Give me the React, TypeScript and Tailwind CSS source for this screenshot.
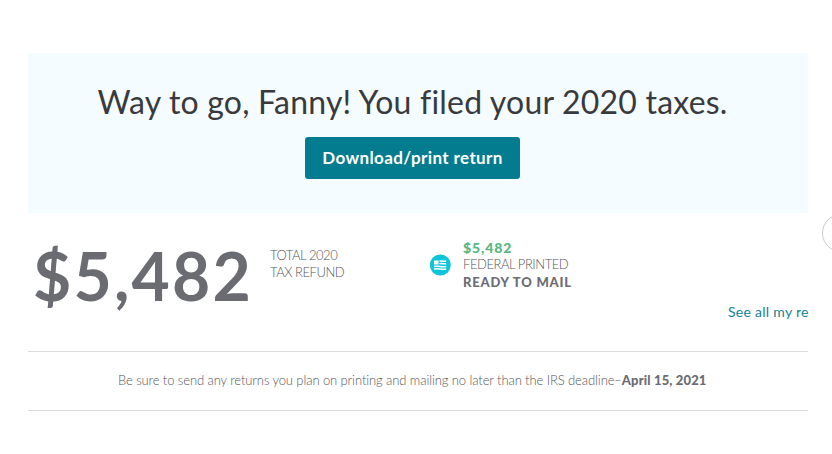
const refund = {
  amount: "$5,482",
  label: ["TOTAL 2020", "TAX REFUND"],
};

function MailIcon() {
  return (
    <svg width="22" height="22" viewBox="0 0 22 22" className="shrink-0">
      <circle cx="11.3" cy="11" r="10.5" fill="#0cc5da" />
      <path d="M5 6.5h4.5v4H5z" fill="#fff" />
      <path
        d="M10.5 7.3c2.2-.7 4.2.4 6.7-.2M10.5 9.8c2.2-.7 4.2.4 6.7-.1M5 12.6c4.2-1 7.4.8 12.2-.2M5 15.1c4.2-1 7.4.8 12.2-.2"
        stroke="#fff"
        strokeWidth="1.5"
        fill="none"
      />
    </svg>
  );
}

export default function App() {
  return (
    <div className="relative h-[454px] w-full overflow-hidden bg-white pt-[53px] pl-7 font-['Lato',sans-serif] text-[#6b6c72]">
      <main className="w-[780px]">
        {/* Banner */}
        <section className="flex h-40 flex-col items-center bg-[#f4fcff] pt-[29px]">
          <h1 className="mr-[11px] text-[32px] leading-10 tracking-[0.2px] whitespace-nowrap text-[#393a3d]">
            Way to go, Fanny! You filed your 2020 taxes.
          </h1>
          <button className="mt-[15px] mr-[11px] h-[41.5px] w-[215px] rounded-[3px] bg-[#037c8f] text-[17px] font-bold tracking-[0.38px] whitespace-nowrap text-white">
            Download/print return
          </button>
        </section>

        {/* Refund summary */}
        <section className="flex h-[138px]">
          <div className="w-[242px] pt-[23px] pl-[5px] text-[66px] leading-[80px] font-bold tracking-[2.2px]">
            {refund.amount}
          </div>
          <div className="w-[159px] pt-[34px] text-[13px] leading-[17px] font-light tracking-[-0.45px] text-[#55565c]">
            {refund.label.map((line) => (
              <p key={line}>{line}</p>
            ))}
          </div>
          <div className="flex w-[299px] gap-[12px]">
            <div className="pt-[41px]">
              <MailIcon />
            </div>
            <div className="pt-[26px] text-[13px] leading-[17px]">
              <p className="text-[14px] font-black tracking-[0.9px] text-[#53b87e]">{refund.amount}</p>
              <p className="font-light tracking-[-0.45px] text-[#55565c]">FEDERAL PRINTED</p>
              <p className="mt-px font-black tracking-[0.8px]">READY TO MAIL</p>
            </div>
          </div>
          <a className="mt-[89px] w-20 text-[14px] leading-5 tracking-[0.28px] whitespace-nowrap text-[#128395]">
            See all my re
          </a>
        </section>

        {/* Mailing deadline */}
        <section className="flex h-[60px] items-center border-y border-[#dcdcdf] pl-[90px] text-[13px] whitespace-nowrap">
          <p>
            <span className="font-light tracking-[-0.095px] text-[#55565c]">
              Be sure to send any returns you plan on printing and mailing no later than the IRS deadline–
            </span>
            <span className="font-black tracking-[0.15px]">April 15, 2021</span>
          </p>
        </section>
      </main>

      {/* Carousel arrow, mostly off the right edge */}
      <div className="absolute top-[214px] left-[822px] size-[38px] rounded-full border border-[#c9cacd] bg-white" />
    </div>
  );
}
